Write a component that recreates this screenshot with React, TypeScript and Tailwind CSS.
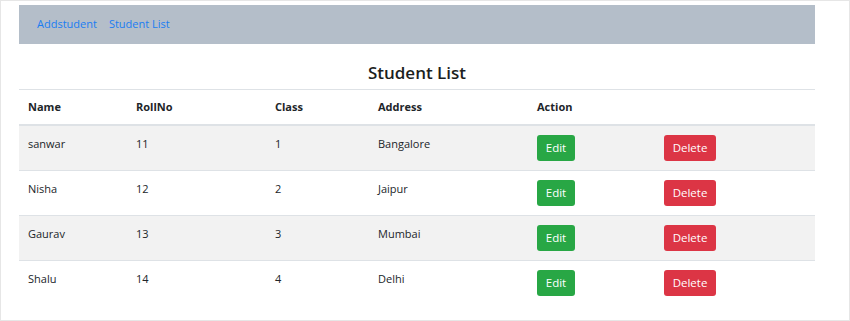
const students = [
  { name: 'sanwar', rollNo: 11, cls: 1, address: 'Bangalore' },
  { name: 'Nisha', rollNo: 12, cls: 2, address: 'Jaipur' },
  { name: 'Gaurav', rollNo: 13, cls: 3, address: 'Mumbai' },
  { name: 'Shalu', rollNo: 14, cls: 4, address: 'Delhi' },
];

export default function App() {
  return (
    <div
      className="w-[850px] h-[321px] border border-[#e6e6e6] bg-white text-[#212529] overflow-hidden"
      style={{ fontFamily: '"Segoe UI", "Open Sans", "Noto Sans", sans-serif' }}
    >
      <div className="w-[796px] ml-[18px] mt-[4px]">
        <nav className="h-[39px] bg-[#b4bec9] flex items-center gap-[12px] pl-[18px] text-[11px] text-[#1a7df2]">
          <a href="#">Addstudent</a>
          <a href="#">Student List</a>
        </nav>

        <h3 className="text-center text-[17px] font-semibold leading-[22px] mt-[18px] mb-[5px] text-[#1b1e21]">Student List</h3>

        <table className="w-full border-collapse text-[11px] table-fixed">
          <colgroup>
            <col className="w-[108px]" />
            <col className="w-[139px]" />
            <col className="w-[103px]" />
            <col className="w-[159px]" />
            <col className="w-[127px]" />
            <col />
          </colgroup>
          <thead>
            <tr className="border-t border-[#dee2e6] border-b-2">
              {['Name', 'RollNo', 'Class', 'Address', 'Action', ''].map((h, i) => (
                <th key={i} className="text-left font-bold pl-[9px] py-[8px] leading-[18px]">{h}</th>
              ))}
            </tr>
          </thead>
          <tbody>
            {students.map((s, i) => (
              <tr
                key={s.name}
                className={`${i < students.length - 1 ? 'border-b border-[#dee2e6]' : ''} ${i % 2 === 0 ? 'bg-[#f2f2f2]' : 'bg-white'}`}
              >
                <td className="pl-[9px] py-[9px] align-top leading-[17px]">{s.name}</td>
                <td className="pl-[9px] py-[9px] align-top leading-[17px]">{s.rollNo}</td>
                <td className="pl-[9px] py-[9px] align-top leading-[17px]">{s.cls}</td>
                <td className="pl-[9px] py-[9px] align-top leading-[17px]">{s.address}</td>
                <td className="pl-[9px] py-[9px] align-top">
                  <button className="h-[26px] w-[38px] rounded-[3px] bg-[#28a745] text-white text-[11.5px]">Edit</button>
                </td>
                <td className="pl-[9px] py-[9px] align-top">
                  <button className="h-[26px] w-[52px] rounded-[3px] bg-[#dc3545] text-white text-[11.5px]">Delete</button>
                </td>
              </tr>
            ))}
          </tbody>
        </table>
      </div>
    </div>
  );
}
